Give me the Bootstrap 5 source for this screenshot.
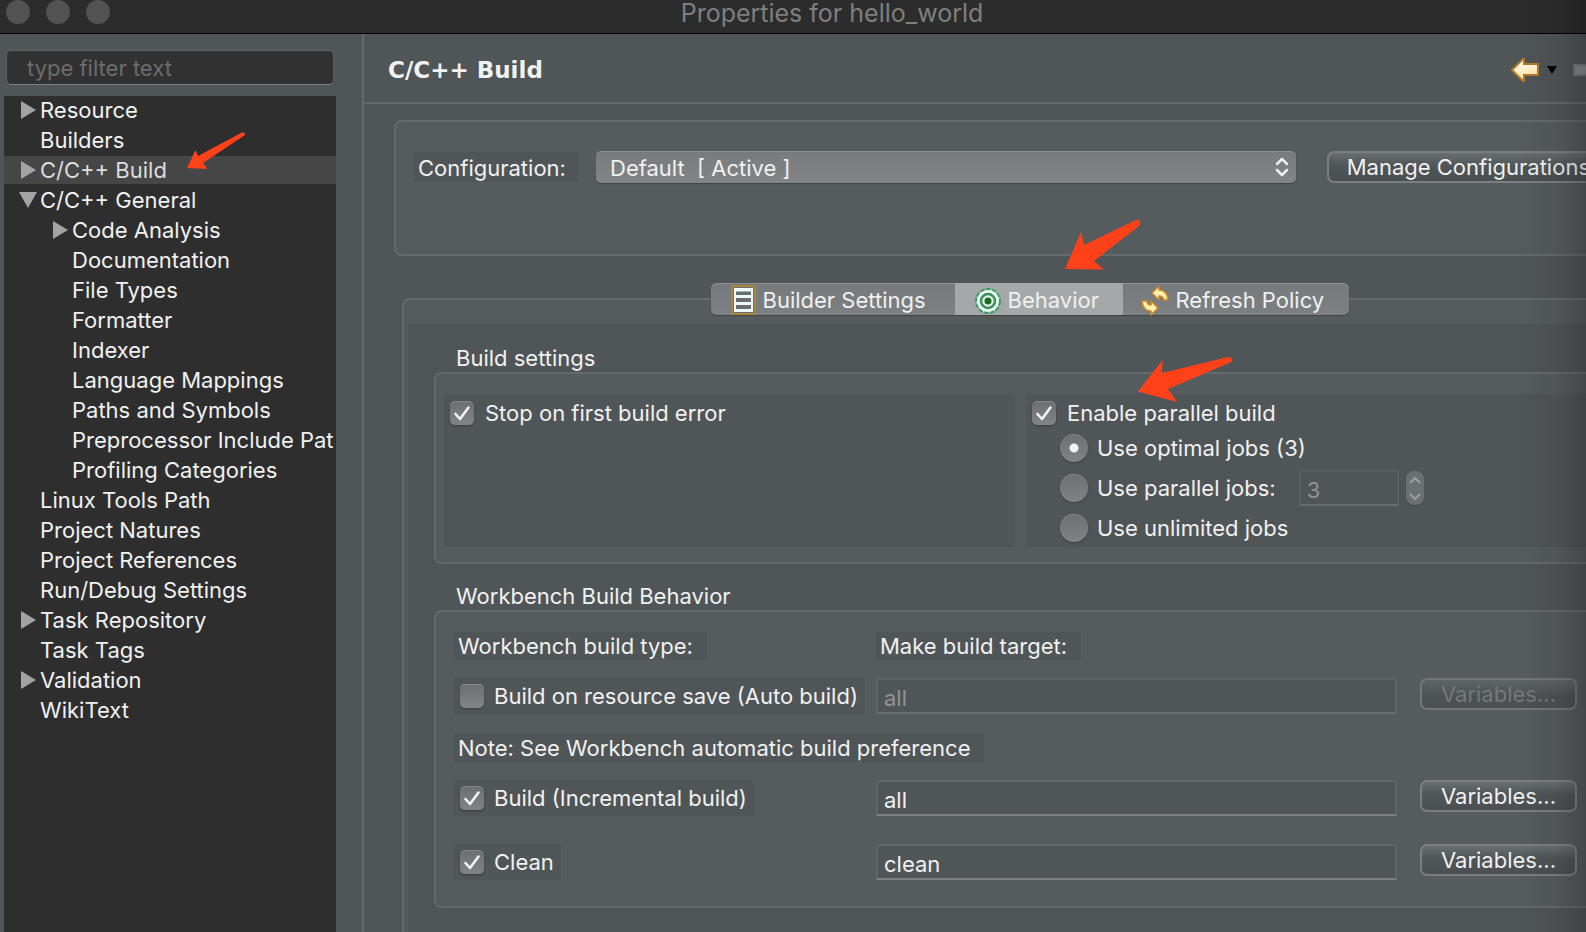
<!DOCTYPE html>
<html lang="en">
<head>
<meta charset="utf-8">
<meta name="viewport" content="width=device-width, initial-scale=1">
<title>Properties for hello_world</title>
<link href="https://cdn.jsdelivr.net/npm/bootstrap@5.3.0/dist/css/bootstrap.min.css" rel="stylesheet">
<style>
  :root { --panel: #505557; --raised: #565b5d; --line: #64696b; --ink: #f0f1f1; --dark: #2e2e2e; }
  body { background: var(--panel); color: var(--ink); font-family: Inter, "Liberation Sans", sans-serif; font-size: 22px; line-height: 28px; overflow: hidden; }
  .titlebar { height: 34px; background: #2c2c2c; border-bottom: 1px solid #000; }
  .titlebar h1 { font-size: 25px; line-height: 26px; font-weight: 400; color: #7f7f7f; padding-left: 78px; }
  .lights { left: 6px; top: 0; gap: 16px; }
  .light { width: 24px; height: 24px; background: #525252; }
  .edge-shade { right: 0; top: 0; bottom: 0; width: 70px; pointer-events: none; z-index: 20; background: linear-gradient(90deg, rgba(0,0,0,0), rgba(0,0,0,.07) 60%, rgba(0,0,0,.22)); }

  .sidebar { flex: 0 0 364px; min-width: 0; border-right: 2px solid var(--line); padding: 16px 26px 0 4px; }
  .filter { height: 35px; min-width: 0; margin: 0 2px 11px; padding: 0 20px; font-size: 22px; color: var(--ink); background: #313131; border: 1px solid #5e6264; border-bottom-color: #7d8183; border-radius: 5px; }
  .filter::placeholder { color: #6c6c6c; opacity: 1; }
  .tree { background: var(--dark); }
  .tree li { height: 30px; }
  .tree a { display: flex; align-items: center; height: 28px; padding-left: 15px; color: var(--ink); text-decoration: none; white-space: nowrap; }
  .tree .child a { padding-left: 47px; }
  .tree a.active { background: #464646; color: #dcdcdc; }
  .tree .twist { width: 21px; height: 20px; flex: none; fill: #a3a3a3; }

  .page-head { height: 70px; border-bottom: 2px solid var(--line); padding: 3px 0 0 24px; }
  .page-head h2 { font-family: "DejaVu Sans", sans-serif; font-size: 23px; line-height: 28px; font-weight: 700; }
  .history { gap: 7px; }
  .history button { background: none; border: 0; padding: 0; display: flex; }

  .frame { background: var(--raised); border: 2px solid var(--line); border-right: 0; border-radius: 8px 0 0 8px; }
  .chip { background: var(--panel); }
  .config { margin: 16px 0 0 30px; min-height: 136px; padding: 29px 0 0 18px; }
  .config .chip { padding: 2px 10px 0 4px; margin-right: 18px; width: 164px; }
  .config select { height: 32px; padding: 1px 40px 0 14px; font-size: 22px; line-height: 28px; color: var(--ink); border: 0; border-radius: 5px; background: url("data:image/svg+xml,%3Csvg xmlns='http://www.w3.org/2000/svg' width='14' height='20' fill='none' stroke='%23eee' stroke-width='2.5' stroke-linecap='round' stroke-linejoin='round'%3E%3Cpath d='M2 7l5-5 5 5M2 13l5 5 5-5'/%3E%3C/svg%3E") no-repeat right 7px center, linear-gradient(#777b7d, #818586); box-shadow: 0 1px 1px #3e4244, inset 0 1px #8b8f91; }
  .push { height: 32px; padding: 0 18px; font-size: 22px; line-height: 26px; color: var(--ink); white-space: nowrap; border: 2px solid #7b7f81; border-radius: 7px; background: linear-gradient(#696e70, #505557 45%, #4a4f51); }
  .push:disabled { color: #74787a; border-color: #73777a; opacity: 1; background: linear-gradient(#5f6466, #4c5153 60%); }
  .manage { margin: 0 -24px 0 31px; }

  .tabs { margin-top: 27px; padding-left: 109px; z-index: 1; }
  .tabset { height: 32px; border-radius: 6px; background: linear-gradient(#767a7c, #7d8082); box-shadow: 0 1px 1px #3e4244, inset 0 1px #8f9294; }
  .tabset button { height: 32px; border: 0; background: none; color: var(--ink); padding: 2px 0 0; display: flex; align-items: center; font-size: 22px; line-height: 28px; }
  .tabset button.active { background: #a5a8a9; }
  .tabset .t-build { width: 244px; padding-left: 20px; }
  .tabset .t-behave { width: 168px; padding-left: 20px; }
  .tabset .t-refresh { width: 226px; padding-left: 18px; }
  .tabset svg { flex: none; margin-right: 7px; }

  .tab-frame { margin: -17px 0 0 38px; padding: 24px 0 0 4px; border-bottom: 0; border-bottom-left-radius: 0; flex: 1; }
  .tab-page { background: var(--panel); padding: 20px 0 24px 26px; min-height: 100%; }
  .caption { font-size: 22px; line-height: 28px; font-weight: 400; margin: 0; padding-left: 22px; }
  .settings { padding: 20px 0 15px 8px; margin-bottom: 18px; }
  .settings .halves { display: grid; grid-template-columns: 1fr 1fr; gap: 11px; margin-right: -11px; }
  .half { padding: 3px 6px 0; height: 153px; }
  .half .tick-row { height: 31px; }
  .radio-row { height: 40px; padding-left: 28px; }

  .tick, .dot { appearance: none; flex: none; margin: 0; background: linear-gradient(#6b6f71, #808486); box-shadow: 0 1px 2px #3b3f41, inset 0 1px #85898b; }
  .tick { width: 24px; height: 24px; border-radius: 5px; }
  .tick:checked { background: url("data:image/svg+xml,%3Csvg xmlns='http://www.w3.org/2000/svg' width='24' height='24' fill='none' stroke='%23f2f2f2' stroke-width='2.6' stroke-linecap='round' stroke-linejoin='round'%3E%3Cpath d='M5.5 13l4.500 5L18.500 6.500'/%3E%3C/svg%3E"), linear-gradient(#6b6f71, #808486); }
  .dot { width: 28px; height: 28px; border-radius: 50%; }
  .dot:checked { background: radial-gradient(circle, #f2f2f2 4px, transparent 5px), linear-gradient(#6b6f71, #808486); }
  .tick-row label { margin-left: 11px; white-space: nowrap; }
  .radio-row label { margin-left: 9px; white-space: nowrap; }

  .field { height: 36px; min-width: 0; width: 100%; padding: 3px 6px 0; font-size: 22px; color: var(--ink); background: var(--panel); border: 2px solid #5f6466; border-bottom-color: #7b7f81; border-radius: 0; }
  .field:disabled { color: #8f9395; border-bottom-color: #686d6f; }
  .radio-row .jobs { width: 100px; margin: 0 7px 0 23px; border-color: #595e60; border-bottom-color: #686d6f; }
  .stepper { width: 18px; height: 34px; border-radius: 8px; background: #6b7072; box-shadow: 0 1px 1px #44484a; }
  .stepper button { border: 0; background: none; padding: 0; flex: 1; display: flex; align-items: center; justify-content: center; }

  .behavior { padding: 20px 9px 26px 18px; }
  .targets { display: grid; grid-template-columns: 422px minmax(0, 1fr) 180px; align-items: start; }
  .targets .push { margin-left: 23px; width: 157px; padding: 0; }
  .after-text { margin-top: 18px; }
  .before-text { margin-top: 20px; }
  .spaced { margin-top: 28px; }
  .behavior .chip { padding: 0 14px 0 4px; width: fit-content; white-space: nowrap; }
  .behavior .tick-row { height: 36px; padding: 0 7px 0 6px; width: fit-content; }
  .behavior .tick-row label { margin-left: 10px; }

  .pointer { position: absolute; fill: #ff4119; pointer-events: none; z-index: 5; }
  .at-tree { left: 183px; top: -24px; }
  .at-tab { left: 110px; top: -64px; }
  .at-parallel { left: 106px; top: -41px; }
</style>
</head>
<body>
<div class="d-flex flex-column min-vh-100 position-relative">
  <header class="titlebar position-relative">
    <div class="lights position-absolute d-flex">
      <span class="light rounded-circle"></span><span class="light rounded-circle"></span><span class="light rounded-circle"></span>
    </div>
    <h1 class="m-0 text-center">Properties for hello_world</h1>
  </header>

  <div class="d-flex flex-fill">
    <aside class="sidebar d-flex flex-column">
      <input class="filter" type="text" placeholder="type filter text" aria-label="Filter">
      <ul class="tree list-unstyled m-0 flex-fill overflow-hidden">
        <li><a href="#"><svg class="twist"><path d="M2 1v18l15-9z"/></svg>Resource</a></li>
        <li><a href="#"><span class="twist"></span>Builders</a></li>
        <li class="position-relative"><a href="#" class="active"><svg class="twist"><path d="M2 1v18l15-9z"/></svg>C/C++ Build</a>
          <svg class="pointer at-tree" width="60" height="38"><path d="M0 36 8.500 18 11 24 54 1Q58-1 58 3L16 31 20 37z"/></svg></li>
        <li><a href="#"><svg class="twist"><path d="M0 2h18l-9 16z"/></svg>C/C++ General</a></li>
        <li class="child"><a href="#"><svg class="twist"><path d="M2 1v18l15-9z"/></svg>Code Analysis</a></li>
        <li class="child"><a href="#"><span class="twist"></span>Documentation</a></li>
        <li class="child"><a href="#"><span class="twist"></span>File Types</a></li>
        <li class="child"><a href="#"><span class="twist"></span>Formatter</a></li>
        <li class="child"><a href="#"><span class="twist"></span>Indexer</a></li>
        <li class="child"><a href="#"><span class="twist"></span>Language Mappings</a></li>
        <li class="child"><a href="#"><span class="twist"></span>Paths and Symbols</a></li>
        <li class="child"><a href="#"><span class="twist"></span>Preprocessor Include Pat</a></li>
        <li class="child"><a href="#"><span class="twist"></span>Profiling Categories</a></li>
        <li><a href="#"><span class="twist"></span>Linux Tools Path</a></li>
        <li><a href="#"><span class="twist"></span>Project Natures</a></li>
        <li><a href="#"><span class="twist"></span>Project References</a></li>
        <li><a href="#"><span class="twist"></span>Run/Debug Settings</a></li>
        <li><a href="#"><svg class="twist"><path d="M2 1v18l15-9z"/></svg>Task Repository</a></li>
        <li><a href="#"><span class="twist"></span>Task Tags</a></li>
        <li><a href="#"><svg class="twist"><path d="M2 1v18l15-9z"/></svg>Validation</a></li>
        <li><a href="#"><span class="twist"></span>WikiText</a></li>
      </ul>
    </aside>

    <main class="d-flex flex-column flex-fill overflow-hidden">
      <div class="page-head d-flex align-items-center justify-content-between">
        <h2 class="m-0">C/C++ Build</h2>
        <div class="history d-flex align-items-center">
          <button type="button" aria-label="Back">
            <svg width="30" height="26"><defs><linearGradient id="gold" x2="0" y2="1"><stop offset="0" stop-color="#fffdf0"/><stop offset="1" stop-color="#ffe7a0"/></linearGradient></defs><path d="M2 13 13 2h1v5h14v11H14v6h-1z" fill="url(#gold)" stroke="#b5792a" stroke-width="2"/></svg>
          </button>
          <button type="button" aria-label="Back history"><svg width="10" height="8"><path d="M0 0h10L5 8z"/></svg></button>
          <button type="button" class="ms-2" aria-label="Forward"><svg width="14" height="12"><path d="M14 1H2v10h12" fill="#85898b" stroke="#717577" stroke-width="2"/></svg></button>
        </div>
      </div>

      <section class="frame config">
        <div class="d-flex align-items-center">
          <label class="chip flex-shrink-0" for="config">Configuration:</label>
          <select class="form-select flex-fill w-auto" id="config"><option>Default&nbsp; [ Active ]</option></select>
          <button type="button" class="push manage">Manage Configurations</button>
        </div>
      </section>

      <div class="tabs d-flex justify-content-center position-relative">
        <div class="tabset d-flex" role="tablist">
          <button type="button" role="tab" class="t-build">
            <svg width="25" height="30"><path d="M1 1h23v28H1z" fill="#6c7072" stroke="#a9863f" stroke-width="2"/><path d="M4 4h17v22H4z" fill="#686c6e" stroke="#f1fafa" stroke-width="2"/><path d="M3 5h19M3 11.500h19M3 18.500h19M3 25.500h19" stroke="#eafafa" stroke-width="3"/></svg>Builder Settings</button>
          <button type="button" role="tab" class="t-behave active position-relative" aria-selected="true">
            <svg width="26" height="28"><circle cx="13" cy="15" r="12" fill="#e9f8ee" stroke="#3f9869" stroke-width="2" stroke-dasharray="5 1"/><circle cx="13" cy="15" r="7" fill="#e4f5e8" stroke="#3b8f5f" stroke-width="2.500"/><circle cx="13" cy="15" r="3.500" fill="#1d6d1f"/></svg>Behavior
            <svg class="pointer at-tab" width="78" height="54"><path d="M0 50 16 13 19 26 71 1Q76 0 75 5 75 6 74 7L29 42 39 50.500z"/></svg></button>
          <button type="button" role="tab" class="t-refresh">
            <svg width="28" height="32" fill="#fff0b0" stroke="#c98a26" stroke-width="1.600" stroke-linejoin="round"><path d="M11 9 18 2v4q8 0 9 10h-4q-1-4-5-4v4z"/><path d="M17 24 10 31v-4q-8 0-9-10h5q0 4 4 4v-4z"/></svg>Refresh Policy</button>
        </div>
      </div>

      <div class="frame tab-frame">
        <div class="tab-page">
          <h3 class="caption">Build settings</h3>
          <section class="frame settings">
            <div class="halves">
              <div class="chip half">
                <div class="tick-row d-flex align-items-center"><input class="tick" type="checkbox" id="stop" checked><label for="stop">Stop on first build error</label></div>
              </div>
              <div class="chip half">
                <div class="tick-row d-flex align-items-center position-relative"><input class="tick" type="checkbox" id="par" checked><label for="par">Enable parallel build</label>
                  <svg class="pointer at-parallel" width="96" height="48"><path d="M0 35.500 24.500 4 24 17 90 1Q95 1 94 5 93 6 91 7L30 33 39 46z"/></svg></div>
                <div class="radio-row d-flex align-items-center"><input class="dot" type="radio" name="jobs" id="j1" checked><label for="j1">Use optimal jobs (3)</label></div>
                <div class="radio-row d-flex align-items-center"><input class="dot" type="radio" name="jobs" id="j2"><label for="j2">Use parallel jobs:</label>
                  <input class="field jobs" type="text" value="3" aria-label="Parallel jobs" disabled>
                  <div class="stepper d-flex flex-column">
                    <button type="button" disabled aria-label="More"><svg width="12" height="8" fill="none" stroke="#9a9e9f" stroke-width="2"><path d="M1 7l5-5 5 5"/></svg></button>
                    <button type="button" disabled aria-label="Fewer"><svg width="12" height="8" fill="none" stroke="#9a9e9f" stroke-width="2"><path d="M1 1l5 5 5-5"/></svg></button>
                  </div></div>
                <div class="radio-row d-flex align-items-center"><input class="dot" type="radio" name="jobs" id="j3"><label for="j3">Use unlimited jobs</label></div>
              </div>
            </div>
          </section>

          <h3 class="caption">Workbench Build Behavior</h3>
          <section class="frame behavior">
            <div class="targets">
              <div class="chip">Workbench build type:</div>
              <div class="chip">Make build target:</div>
            </div>
            <div class="targets after-text">
              <div class="chip tick-row d-flex align-items-center"><input class="tick" type="checkbox" id="auto"><label for="auto">Build on resource save (Auto build)</label></div>
              <input class="field" type="text" value="all" aria-label="Auto build target" disabled>
              <button type="button" class="push" disabled>Variables...</button>
            </div>
            <div class="chip before-text">Note: See Workbench automatic build preference</div>
            <div class="targets after-text">
              <div class="chip tick-row d-flex align-items-center"><input class="tick" type="checkbox" id="inc" checked><label for="inc">Build (Incremental build)</label></div>
              <input class="field" type="text" value="all" aria-label="Incremental build target">
              <button type="button" class="push">Variables...</button>
            </div>
            <div class="targets spaced">
              <div class="chip tick-row d-flex align-items-center"><input class="tick" type="checkbox" id="clean" checked><label for="clean">Clean</label></div>
              <input class="field" type="text" value="clean" aria-label="Clean target">
              <button type="button" class="push">Variables...</button>
            </div>
          </section>
        </div>
      </div>
    </main>
  </div>
  <div class="edge-shade position-absolute"></div>
</div>
<script src="https://cdn.jsdelivr.net/npm/bootstrap@5.3.0/dist/js/bootstrap.bundle.min.js"></script>
</body>
</html>
